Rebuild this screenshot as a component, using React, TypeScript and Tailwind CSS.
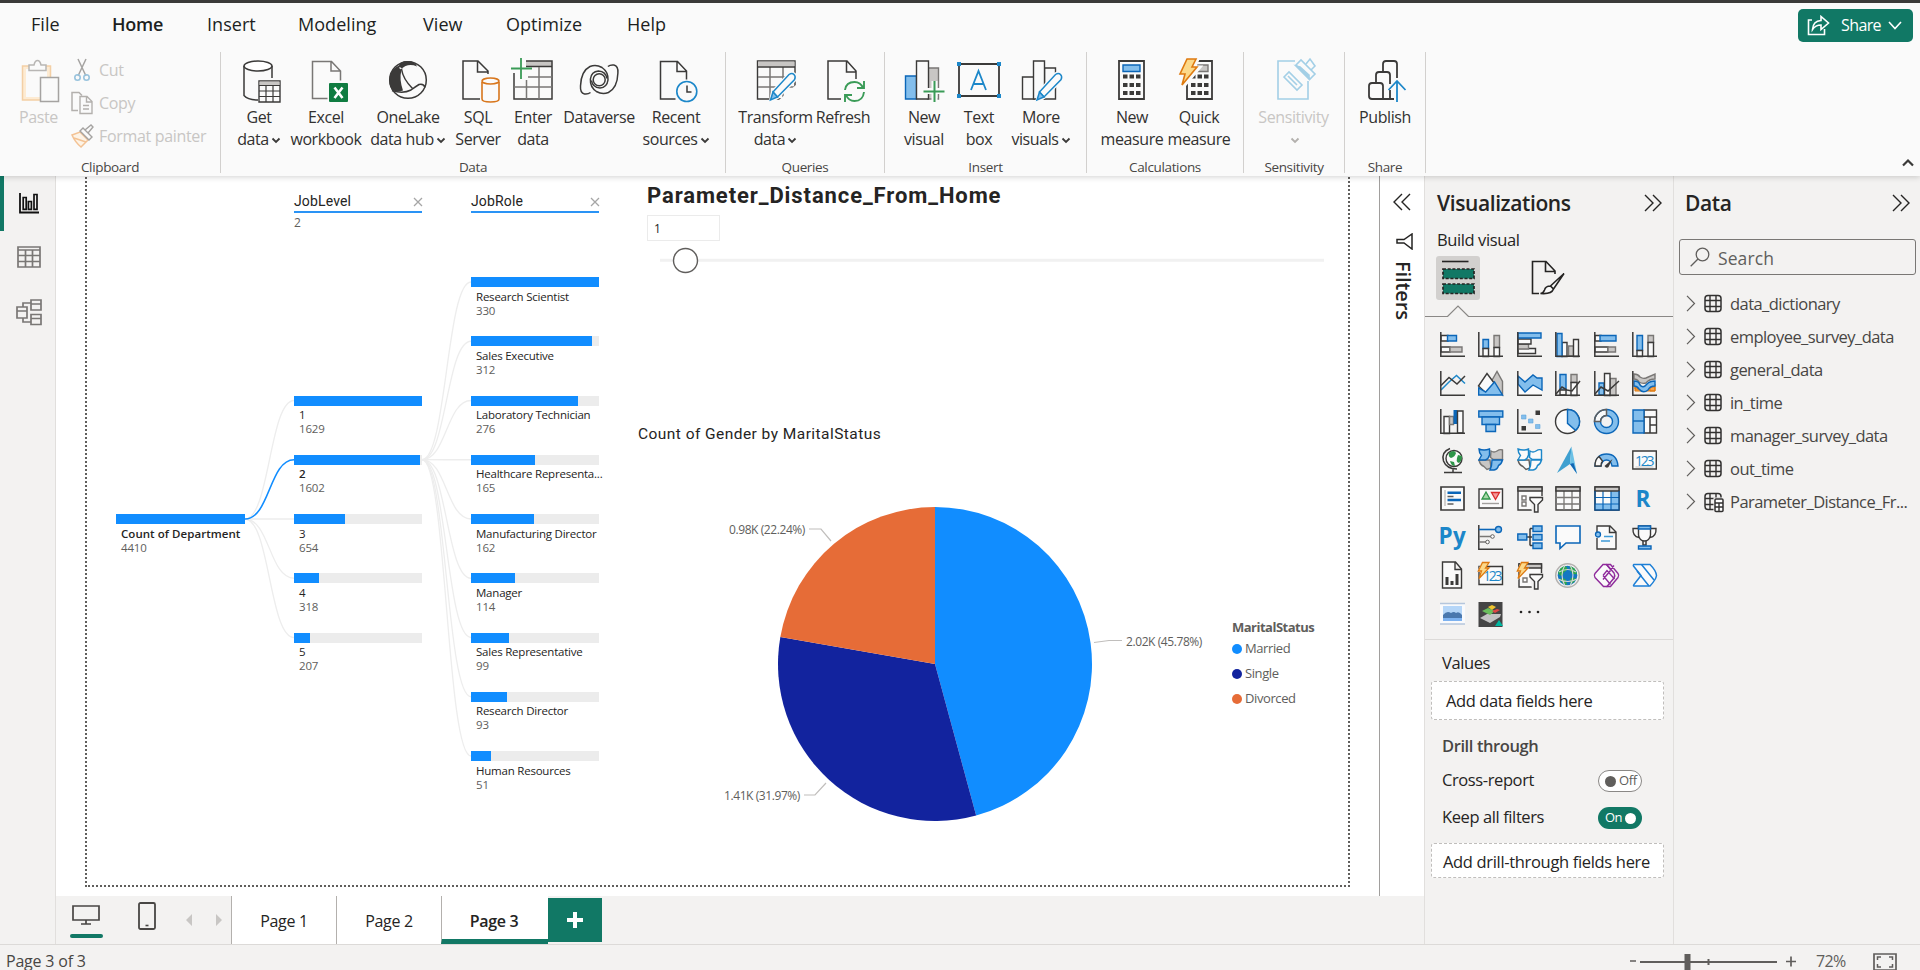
import React from "react";

type Kids = { children?: React.ReactNode };
type SvgP = React.SVGProps<SVGPathElement>;

const DARK = "#3b3a39";

const Svg = ({ w, h, vb, children, className }: Kids & { w: number; h: number; vb?: string; className?: string }) => (
  <svg width={w} height={h} viewBox={vb ?? `0 0 ${w} ${h}`} fill="none" className={className ?? "block shrink-0"}>
    {children}
  </svg>
);
const P = (p: SvgP) => <path stroke={DARK} strokeWidth={1.5} fill="none" {...p} />;
const box = (x: number, y: number, w: number, h: number) => `M${x} ${y}h${w}v${h}h${-w}z`;
const Blue = (p: SvgP) => <path fill="#83beec" stroke="#0b66b8" strokeWidth={1.4} {...p} />;
const Gray = (p: SvgP) => <path fill="#c8c6c4" stroke="#797775" strokeWidth={1.4} {...p} />;
const Wht = (p: SvgP) => <path fill="#fafafa" stroke={DARK} strokeWidth={1.4} {...p} />;
const Axis = () => <P d="M.8 0V24.2H25" />;

/* ---------- ribbon icons (42 x 44) ---------- */
const Pencil = () => (
  <g>
    <path d="M18 33 34 15.500q3-2 5 0t.6 5L22.500 38 16 42z" fill="#fafafa" stroke="#fafafa" strokeWidth={4} />
    <path d="M18 33 34 15.500q3-2 5 0t.6 5L22.500 38z" fill="#fafafa" stroke="#1c87c9" strokeWidth={1.5} />
    <path d="M18 33 22.500 38 15.500 41z" fill="#83beec" stroke="#1c87c9" strokeWidth={1.500} />
  </g>
);

const swirl = "M12.500 33.500Q10 35.500 6.500 35 2 34 2.500 27 3 12 12 7.500 18 5 24 8.500 30.500 13 30 21 29 28.500 22 29 14.500 28.500 13.500 21.500";

const icons: Record<string, React.ReactNode> = {
  paste: (
    <g strokeWidth={1.5} transform="translate(2 0)">
      <path d="M2.500 7h28v34h-28z" fill="#fdebd3" stroke="#f3cfa5" />
      <path d="M6 10h21v28H6z" fill="#fafafa" />
      <path d="M9 11.500V6h5q1-4.500 3.500-4.500T21 6h5v5.500z" fill="#fafafa" stroke="#b8b6b4" />
      <path d="M20.500 18.500h18v24h-18z" fill="#fafafa" stroke="#a5a3a1" />
    </g>
  ),
  getdata: (
    <g transform="translate(2 0)">
      <P d="M4 7v29.500q4 4.500 14 4.500M32 7v12" />
      <ellipse cx="18" cy="7" rx="14" ry="5" stroke={DARK} strokeWidth={1.5} fill="#fff" />
      <Wht d={box(19, 22, 21, 21)} />
      <path d="M19.500 22.500h20v4h-20z" fill="#c8c6c4" />
      <P strokeWidth={1.2} d="M19 26.500h21M19 32h21M19 37.500h21M26 26.500V43M33 26.500V43" />
    </g>
  ),
  excel: (
    <g transform="translate(3.500 .5)">
      <P stroke="#797775" d="M19 39H4V2h19l9 9.500v9.500M22.500 2v9.500H32" />
      <rect x="20.500" y="23.500" width="19" height="19" rx="1" fill="#107c41" />
      <path d="m26 28 8 10.500M34 28l-8 10.500" stroke="#fff" strokeWidth={2.6} />
    </g>
  ),
  onelake: (
    <g>
      <circle cx="21" cy="21" r="18.300" fill="#fafafa" stroke={DARK} strokeWidth={1.500} />
      <path d="M12 6.500Q13 2 20.500 2T30 7.500Q24 5 18.500 7 15 8.500 14.500 11 12 20 16 31.500 10 33.500 5 31 1.500 25 2.500 18 5 9 12 6.500z" fill={DARK} />
      <path d="M12.500 8.500 14.500 10" stroke="#fafafa" strokeWidth={1.300} />
      <P d="M14.500 10Q16 20 25.500 29.500M5 31.500Q16 35 24 31 28 28 32 25.500q5-1 6 3" />
    </g>
  ),
  sql: (
    <g transform="translate(2 0)">
      <P d="M21 40H4V2h15l10 10v3M18.500 2v11H29" />
      <path d="M23 23v17q0 3 8.500 3t8.500-3V23" stroke="#d8761c" strokeWidth={1.6} fill="#fafafa" />
      <ellipse cx="31.500" cy="22" rx="8.500" ry="3" stroke="#d8761c" strokeWidth={1.600} fill="#fafafa" />
    </g>
  ),
  enter: (
    <g>
      <path d="M14 2h26v5H14z" fill="#c8c6c4" />
      <P d="M14 2h26v38H2V14M14 7.500h26" />
      <P stroke="#797775" d="M16 18h24M2 28h38M14.500 21v19M27 8v32" />
      <path d="M9-1v21M-1 9.500h21" stroke="#3a9b57" strokeWidth={1.800} />
    </g>
  ),
  dataverse: (
    <g>
      <P d={swirl} />
      <P d={swirl} transform="rotate(180 21.200 20.500)" />
      <circle cx="21.200" cy="20.800" r="6" stroke={DARK} strokeWidth={1.500} />
    </g>
  ),
  recent: (
    <g transform="translate(1.500 .5)">
      <P d="M19 39.500H4V2h17l9 9.500v8.500M20.500 2v10H30" />
      <circle cx="30.300" cy="32" r="10" fill="#fafafa" stroke="#1c87c9" strokeWidth={1.600} />
      <P d="M30.500 26v6.500H35" />
    </g>
  ),
  transform: (
    <g>
      <Wht d={box(2.500, 2, 37.500, 38)} />
      <path d="M3 2.500h36.500v5H3z" fill="#c8c6c4" />
      <P d="M3 18h37M3 28h37M15 8v32M28 8v32" stroke="#797775" />
      <P d="M3 8h37" />
      <path d="M24 41h18V25z" fill="#fafafa" />
      <Pencil />
    </g>
  ),
  refresh: (
    <g transform="translate(2 0)">
      <P d="M17 40H4V2h19l9 10v8M22.500 2v11H32" />
      <path d="M21 31q1-8 9.500-8 6 0 8.500 6M40 33q-1 9-9.500 9-6 0-8.500-6M40 22v7h-7M21 43v-7h7" stroke="#3a9b57" strokeWidth={1.9} />
    </g>
  ),
  newvisual: (
    <g transform="translate(1.500 0)">
      <Gray d={box(23, 9, 11, 31)} />
      <Blue d={box(1, 17, 11, 23)} />
      <Wht d={box(12, 2, 12, 38)} />
      <path d="M30 22v21M20 32h21" stroke="#fafafa" strokeWidth={6} />
      <path d="M30 22v21M19 32.500h21" stroke="#3a9b57" strokeWidth={2} />
    </g>
  ),
  textbox: (
    <g>
      <Wht strokeWidth={1.800} d={box(1, 5, 40, 32)} />
      <path d="M13 31 20.500 12 28 31M15.500 25h10" stroke="#1c87c9" strokeWidth={1.800} />
      <path d="M-1 3h4v4h-4zM39 3h4v4h-4zM-1 35h4v4h-4zM39 35h4v4h-4z" fill="#1c87c9" />
    </g>
  ),
  morevisuals: (
    <g transform="translate(1.500 0)">
      <Wht d={box(23, 9, 11, 31)} />
      <Wht d={box(1, 18, 12, 22)} />
      <Wht d={box(12, 2, 11, 38)} />
      <Pencil />
    </g>
  ),
  calc: (
    <g>
      <Wht strokeWidth={1.800} d={box(8, 2, 25, 38)} />
      <Blue d={box(12, 6, 17, 6.500)} />
      <path d="M12 15.500h4.500v4H12zm6.500 0H23v4h-4.500zm6.500 0h4.500v4H25zM12 24h4.500v4H12zm6.500 0H23v4h-4.500zm6.500 0h4.500v4H25zM12 32h4.500v4H12zm6.500 0H23v4h-4.500zm6.500 0h4.500v4H25z" fill={DARK} />
    </g>
  ),
  quick: (
    <g transform="translate(-1 0)">
      <Wht strokeWidth={1.800} d={box(10, 2, 25, 38)} />
      <Gray d={box(19, 6, 12, 6.500)} />
      <path d="M14 15.500h4.500v4H14zm6.500 0H25v4h-4.500zm6.500 0h4.500v4H27zM14 24h4.500v4H14zm6.500 0H25v4h-4.500zm6.500 0h4.500v4H27zM14 32h4.500v4H14zm6.500 0H25v4h-4.500zm6.500 0h4.500v4H27z" fill={DARK} />
      <path d="M10 0h10l-4 9h5L5 28l3-12H3z" fill="#fafafa" stroke="#fafafa" strokeWidth={5} />
      <path d="M10 0h9l-4 8h5L5 26l3-11H3z" fill="#fcd98a" stroke="#de7a10" strokeWidth={1.600} />
    </g>
  ),
  sensitivity: (
    <g stroke="#a3cfe6" strokeWidth={1.600} transform="translate(2 0)">
      <path d="M20 2H3v38h30V22" />
      <path d="m9 18 5-5 13 13-5 5zM13 17l9 9" />
      <path d="m21 6 5-5 14 14-5 5z" />
      <path d="m21 7 4 1 9 8v4z" fill="#a3cfe6" />
      <path d="m31 5 4-5 5 7-4 4" />
    </g>
  ),
  publish: (
    <g transform="translate(2 0)">
      <P strokeWidth={1.800} d="M17 12V5q0-3 3-3h8q3 0 3 3v14M10 23v-7q0-3 3-3h8q3 0 3 3v9M3 27q0-3 3-3h8q3 0 3 3v13H6q-3 0-3-3zM17 40h11M24 31v9" />
      <path d="M31 43V22M22.500 31l8.500-9 8.500 9" stroke="#1c87c9" strokeWidth={1.800} />
    </g>
  ),
};

const Chev = ({ c = DARK }: { c?: string }) => (
  <Svg w={10} h={7} className="mb-px ml-[2px] inline-block">
    <path d="m1.500 1.500 3.500 3.500 3.500-3.500" stroke={c} strokeWidth={1.800} />
  </Svg>
);

type Btn = { icon: string; w: string; a: string; b?: string; chev?: boolean; off?: boolean };
const groups: { name: string; w: string; btns: Btn[] }[] = [
  {
    name: "Data",
    w: "w-[505px]",
    btns: [
      { icon: "getdata", w: "w-[76px]", a: "Get", b: "data", chev: true },
      { icon: "excel", w: "w-[58px]", a: "Excel", b: "workbook" },
      { icon: "onelake", w: "w-[106px]", a: "OneLake", b: "data hub", chev: true },
      { icon: "sql", w: "w-[34px]", a: "SQL", b: "Server" },
      { icon: "enter", w: "w-[76px]", a: "Enter", b: "data" },
      { icon: "dataverse", w: "w-[56px]", a: "Dataverse" },
      { icon: "recent", w: "w-[98px]", a: "Recent", b: "sources", chev: true },
    ],
  },
  {
    name: "Queries",
    w: "w-[159px]",
    btns: [
      { icon: "transform", w: "w-[99px]", a: "Transform", b: "data", chev: true },
      { icon: "refresh", w: "w-[36px]", a: "Refresh" },
    ],
  },
  {
    name: "Insert",
    w: "w-[202px]",
    btns: [
      { icon: "newvisual", w: "w-[78px]", a: "New", b: "visual" },
      { icon: "textbox", w: "w-[32px]", a: "Text", b: "box" },
      { icon: "morevisuals", w: "w-[92px]", a: "More", b: "visuals", chev: true },
    ],
  },
  {
    name: "Calculations",
    w: "w-[157px]",
    btns: [
      { icon: "calc", w: "w-[90px]", a: "New", b: "measure" },
      { icon: "quick", w: "w-[44px]", a: "Quick", b: "measure" },
    ],
  },
  { name: "Sensitivity", w: "w-[101px]", btns: [{ icon: "sensitivity", w: "w-[99px]", a: "Sensitivity", b: "", chev: true, off: true }] },
  { name: "Share", w: "w-[81px]", btns: [{ icon: "publish", w: "w-[80px]", a: "Publish" }] },
];

const RibbonButton = ({ icon, w, a, b, chev, off }: Btn) => (
  <div className={`${w} flex shrink-0 flex-col items-center whitespace-nowrap text-[16px] leading-[22px] ${off ? "text-[#c8c6c4]" : "text-[#323130]"}`}>
    <Svg w={42} h={44} className="mb-[3px] block shrink-0 overflow-visible">{icons[icon]}</Svg>
    <span>{a}</span>
    {b !== undefined && (
      <span>
        {b}
        {chev && <Chev c={off ? "#b3b0ad" : DARK} />}
      </span>
    )}
  </div>
);

const menu = [
  { t: "File", w: "w-[81px]" },
  { t: "Home", w: "w-[95px]" },
  { t: "Insert", w: "w-[91px]" },
  { t: "Modeling", w: "w-[125px]" },
  { t: "View", w: "w-[83px]" },
  { t: "Optimize", w: "w-[121px]" },
  { t: "Help", w: "w-[60px]" },
];

const groupLabel = "pt-[2px] text-center text-[13.500px] leading-[20px] tracking-[-0.35px] text-[#484644]";

function Header() {
  return (
    <header className="relative z-10 h-[176px] shrink-0 border-t-[3px] border-[#3b3a39] bg-[#fafafa] shadow-[0_1px_6px_rgba(0,0,0,0.18)]">
      <div className="flex h-[44px] items-center pl-[31px] text-[18px] text-[#201f1e]">
        {menu.map((m) => (
          <span key={m.t} className={`${m.w} pb-[2px] ${m.t === "Home" ? "font-semibold tracking-[-0.2px]" : "tracking-[0.05px]"}`}>{m.t}</span>
        ))}
        <button className="mr-[7px] ml-auto flex h-[33px] w-[115px] items-center rounded-[5px] bg-[#117865] pl-[9px] text-[16px] text-white">
          <Svg w={23} h={21}>
            <path d="M5 5H1.500v14.500h16V14" stroke="#fff" strokeWidth={1.600} />
            <path d="M14 1.500v4Q6 6 5.500 14.500q3-4.500 8.500-4.500v4.500L21.500 8z" stroke="#fff" strokeWidth={1.600} />
          </Svg>
          <span className="ml-[11px] w-[47px] text-left tracking-[-0.6px]">Share</span>
          <Svg w={15} h={9}><path d="m1 1 6 6.500L13 1" stroke="#fff" strokeWidth={1.600} /></Svg>
        </button>
      </div>
      <div className="mt-[5px] flex h-[121px]">
        <div className="flex w-[221px] shrink-0 flex-col border-r border-[#d2d0ce] text-[#c8c6c4]">
          <div className="flex h-[103px] shrink-0">
            <div className="flex w-[67px] flex-col items-center pt-[7px] pl-[10px] text-[16px] leading-[22px]">
              <Svg w={42} h={44} className="mb-[3px] block shrink-0 overflow-visible">{icons.paste}</Svg>
              <span>Paste</span>
            </div>
            <div className="flex flex-col pt-px pl-[4px] text-[16px] tracking-[-0.33px]">
              <div className="flex h-[33px] items-center">
                <Svg w={28} h={24}>
                  <path d="M7 1l8 17M15 1 7 18" stroke="#a5a3a1" strokeWidth={1.500} />
                  <circle cx="6.500" cy="19.500" r="2.700" stroke="#98c3dd" strokeWidth={1.600} />
                  <circle cx="15.500" cy="19.500" r="2.700" stroke="#98c3dd" strokeWidth={1.600} />
                </Svg>
                Cut
              </div>
              <div className="flex h-[33px] items-center">
                <Svg w={28} h={24}>
                  <path d="M7 19.500H1V1.500h7l3 3" stroke="#b3b0ad" strokeWidth={1.500} />
                  <path d="M9 5.500h7l5 5v12H9zM15.500 6v5H21M12 14.500h6M12 18h6" stroke="#b3b0ad" strokeWidth={1.400} />
                </Svg>
                Copy
              </div>
              <div className="flex h-[33px] items-center">
                <Svg w={28} h={24}>
                  <path d="m1 11 8-3 8 8-7 7q-6-5-9-12zM3 14l12 4" stroke="#f3c294" strokeWidth={1.500} fill="#fdf3e6" />
                  <path d="m9 7 3-3 9 9-3 3zM14 6l6-5 2 2-5 6" stroke="#a5a3a1" strokeWidth={1.400} fill="#fafafa" />
                </Svg>
                Format painter
              </div>
            </div>
          </div>
          <div className={groupLabel}>Clipboard</div>
        </div>
        {groups.map((g) => (
          <div key={g.name} className={`${g.w} flex shrink-0 flex-col border-r border-[#d2d0ce]`}>
            <div className="flex h-[103px] shrink-0 pt-[7px]">
              {g.btns.map((b) => <RibbonButton key={b.icon} {...b} />)}
            </div>
            <div className={groupLabel}>{g.name}</div>
          </div>
        ))}
        <div className="mr-[6px] ml-auto flex items-end pb-[6px]">
          <Svg w={12} h={9}><path d="m1 7.500 5-5 5 5" stroke={DARK} strokeWidth={2.200} /></Svg>
        </div>
      </div>
    </header>
  );
}

function LeftRail() {
  return (
    <nav className="flex w-[56px] shrink-0 flex-col border-r border-[#e1dfdd] bg-[#f3f2f1]">
      <div className="flex h-[55px] items-center border-l-4 border-[#117865] pl-[15px]">
        <Svg w={20} h={21}>
          <path d="M1 0v19.500h19" stroke="#111" strokeWidth={1.800} />
          <path d="M4.200 4.500h3v11.800h-3zM9.400 8.500h3v7.800h-3zM15 1.500h3v14.800h-3z" stroke="#111" strokeWidth={1.700} />
        </Svg>
      </div>
      <div className="flex h-[52px] items-center pl-[17px]">
        <Svg w={24} h={22}><path d="M1 1h22v20H1zM1 4h22M1 9.500h22M1 15.500h22M8.500 4v17M15.500 4v17" stroke="#797775" strokeWidth={1.700} /></Svg>
      </div>
      <div className="flex h-[58px] items-center pl-[16px]">
        <Svg w={26} h={27}><path d="M1 8h10v11H1zM1 12h10M15 1h10v10H15zM15 5h10M15 15.500h10v10H15zM15 19.500h10M7 8V4h8M7 19v4h8" stroke="#797775" strokeWidth={1.700} /></Svg>
      </div>
    </nav>
  );
}

type TreeNode = { label: string; value: string; fill: number; x: number; y: number; bold?: boolean };
const ROW = 59.25;
const tree: TreeNode[] = [
  { label: "Count of Department", value: "4410", fill: 129, x: 116, y: 519, bold: true },
  ...([["1", "1629", 128], ["2", "1602", 126], ["3", "654", 51], ["4", "318", 25], ["5", "207", 16]] as [string, string, number][]).map(
    ([label, value, fill], i) => ({ label, value, fill, x: 294, y: 400.5 + i * ROW, bold: label === "2" })
  ),
  ...([
    ["Research Scientist", "330", 128],
    ["Sales Executive", "312", 121],
    ["Laboratory Technician", "276", 107],
    ["Healthcare Representa...", "165", 64],
    ["Manufacturing Director", "162", 63],
    ["Manager", "114", 44],
    ["Sales Representative", "99", 38],
    ["Research Director", "93", 36],
    ["Human Resources", "51", 20],
  ] as [string, string, number][]).map(([label, value, fill], i) => ({ label, value, fill, x: 471, y: 282 + i * ROW })),
];

const link = (x1: number, y1: number, x2: number, y2: number) =>
  `M${x1} ${y1}C${(x1 + x2) / 2} ${y1} ${(x1 + x2) / 2} ${y2} ${x2} ${y2}`;

const arc = (a0: number, a1: number) => {
  const pt = (a: number) => `${935 + 157 * Math.sin(a * 2 * Math.PI)} ${664 - 157 * Math.cos(a * 2 * Math.PI)}`;
  return `M935 664L${pt(a0)}A157 157 0 ${a1 - a0 > 0.5 ? 1 : 0} 1 ${pt(a1)}z`;
};

const TreeHeader = ({ t, left }: { t: string; left: string }) => (
  <div className={`absolute top-[16px] ${left} flex h-[21px] w-[128px] items-center justify-between border-b-[2px] border-[#2a93f5] font-[Roboto] text-[14px] tracking-[0.15px] text-[#252423]`}>
    {t}
    <Svg w={10} h={10} className="mt-px -mr-px block"><path d="m1 1 8 8M9 1 1 9" stroke="#a6a6a6" strokeWidth={1.300} /></Svg>
  </div>
);

function Canvas() {
  return (
    <div className="relative h-[720px] w-[1323px] shrink-0 overflow-hidden bg-white">
      <div className="absolute -top-[20px] left-[29px] h-[731px] w-[1265px] border-2 border-dotted border-[#605e5c]" />
      <svg className="absolute inset-0" width={1323} height={720} viewBox="56 176 1323 720" fill="none">
        <g stroke="#ededed" strokeWidth={1.300}>
          {[0, 2, 3, 4].map((i) => <path key={i} d={link(245, 519, 294, 400.5 + i * ROW)} />)}
          {[0, 1, 2, 3, 4, 5, 6, 7, 8].map((i) => <path key={i} d={link(422, 459.7, 471, 282 + i * ROW)} />)}
        </g>
        <path d={link(245, 519, 294, 459.7)} stroke="#118dff" strokeWidth={1.500} />
        <path d={arc(0, 0.4578)} fill="#118dff" />
        <path d={arc(0.4578, 0.7776)} fill="#12239e" />
        <path d={arc(0.7776, 1)} fill="#e66c37" />
        <g stroke="#c0bebc" strokeWidth={1.200}>
          <path d="m1094 642.500 15-2h13M809 529h12l10 12M804 795h11l11-12" />
        </g>
        <g fill="#605e5c" fontSize={12} className="font-['Open_Sans',sans-serif]">
          <text x={1126} y={645.500} textLength={76}>2.02K (45.78%)</text>
          <text x={729} y={533.500} textLength={76}>0.98K (22.24%)</text>
          <text x={724} y={799.500} textLength={76}>1.41K (31.97%)</text>
        </g>
        <path d="M660 260.300h664" stroke="#f1f1f1" strokeWidth={3} />
        <circle cx={685.500} cy={260.500} r={12} fill="#fff" stroke="#605e5c" strokeWidth={1.400} />
      </svg>
      <TreeHeader t="JobLevel" left="left-[238px]" />
      <TreeHeader t="JobRole" left="left-[415px]" />
      <span className="absolute top-[39px] left-[238px] text-[12px] leading-[16px] text-[#605e5c]">2</span>
      {tree.map((n) => (
        <div key={n.label} className="absolute w-[128px]" style={{ left: n.x - 56, top: n.y - 5 - 176 }}>
          <div className="h-[10px] bg-[#ececec]">
            <div className="h-full bg-[#118dff]" style={{ width: n.fill }} />
          </div>
          <div className={`mt-[2.500px] pl-[5px] text-[11.500px] leading-[14px] whitespace-nowrap text-[#252423] ${n.bold ? "font-semibold tracking-[0.05px]" : "tracking-[-0.22px]"}`}>{n.label}</div>
          <div className="pl-[5px] text-[11.500px] leading-[14px] tracking-[-0.2px] text-[#605e5c]">{n.value}</div>
        </div>
      ))}
      <div className="absolute top-[5.500px] left-[591px] font-[Roboto] text-[22px] leading-[28px] font-bold tracking-[0.9px] text-[#252423]">Parameter_Distance_From_Home</div>
      <div className="absolute top-[39px] left-[591px] flex h-[26px] w-[73px] items-center border border-[#ebebeb] pt-px pl-[6px] text-[12px] text-[#252423]">1</div>
      <div className="absolute top-[247.500px] left-[582px] font-[Roboto] text-[15.500px] leading-[20px] tracking-[0.45px] text-[#252423]">Count of Gender by MaritalStatus</div>
      <div className="absolute top-[441px] left-[1176px] text-[13px] tracking-[-0.4px] text-[#605e5c]">
        <div className="h-[19px] leading-[20px] font-bold tracking-[-0.5px]">MaritalStatus</div>
        {[["Married", "bg-[#118dff]"], ["Single", "bg-[#12239e]"], ["Divorced", "bg-[#e66c37]"]].map(([t, c]) => (
          <div key={t} className="flex h-[25px] items-center gap-[3px]">
            <span className={`size-[10px] rounded-full ${c}`} />
            {t}
          </div>
        ))}
      </div>
    </div>
  );
}

const tabs = [
  { t: "Page 1", c: "w-[105px] pt-px" },
  { t: "Page 2", c: "w-[105px] pt-px" },
  { t: "Page 3", c: "w-[107px] border-b-[5px] border-b-[#117865] pt-[6px] pr-[2px] font-semibold" },
];

function PageTabs() {
  return (
    <div className="flex h-[48px] bg-[#f3f2f1]">
      <div className="flex w-[175px]">
        <div className="mt-[9px] ml-[14px] flex w-[33px] flex-col items-center">
          <Svg w={28} h={20} className="mr-[2px] block"><path d="M1 1h26v14H1zM14 15v4M9 19h10" stroke="#484644" strokeWidth={1.700} /></Svg>
          <div className="mt-[9px] h-[4px] w-[33px] rounded-full bg-[#117865]" />
        </div>
        <Svg w={18} h={28} className="mt-[6px] ml-[35px] block">
          <rect x="1" y="1" width="16" height="26" rx="1.500" stroke="#484644" strokeWidth={1.800} />
          <path d="M7.500 23.500h3" stroke="#484644" strokeWidth={1.600} />
        </Svg>
        <Svg w={36} h={12} className="mt-[18px] ml-[30px] block"><path d="M6 0v12L0 6zM30 0v12l6-6z" fill="#c8c6c4" /></Svg>
      </div>
      {tabs.map(({ t, c }) => (
        <div key={t} className={`flex items-center justify-center border-l border-[#b3b0ad] bg-white text-[16px] tracking-[-0.3px] text-[#252423] ${c}`}>
          {t}
        </div>
      ))}
      <div className="mt-[2px] flex h-[44px] w-[54px] items-center justify-center bg-[#117865]">
        <Svg w={16} h={16}><path d="M8 0v16M0 8h16" stroke="#fff" strokeWidth={4} /></Svg>
      </div>
    </div>
  );
}

const Dbl = ({ left }: { left?: boolean }) => (
  <Svg w={18} h={18} className={left ? "block -scale-x-100" : "block"}>
    <path d="m1 1 8 8-8 8M9 1l8 8-8 8" stroke="#252423" strokeWidth={1.400} />
  </Svg>
);

function FiltersPane() {
  return (
    <aside className="flex h-[720px] w-[45px] flex-col items-center border-l border-[#a19f9d] bg-white pt-[17px]">
      <Dbl left />
      <Svg w={17} h={17} className="mt-[22px] ml-[4px] block"><path d="M16 1v15L8 10H1V6.500h7z" stroke="#252423" strokeWidth={1.500} /></Svg>
      <span className="mt-[11px] pl-[1px] text-[20px] leading-[24px] font-semibold tracking-[-0.1px] text-[#252423] [writing-mode:vertical-rl]">Filters</span>
    </aside>
  );
}

const bolt = (
  <g>
    <path d="M4-1h7L8 5h4L1 17l2-8H-1z" fill="#f3f2f1" />
    <path d="M4.500-.5H11L7.500 5H11L1 15.500 3.500 8H.3z" fill="#fcd98a" stroke="#de7a10" strokeWidth={1.300} />
  </g>
);
const funnel = <Wht d="M13 11.500h12.500v2.500l-4.500 4.500V26h-3.500v-7.500L13 14z" />;
const num = (x: number) => (
  <text x={x} y={18} fontSize={14} textLength={19} fill="#1c87c9" className="font-['Open_Sans',sans-serif]">123</text>
);
const landA = "M1 1q5 2 10.500 0v6q-1 4-4 5H1q1-2 2.500-4.500Q1 5 1 1z";
const landB = "M13 3q3 2 6 0t5.500-1v9.500h-9l-3-2z";
const landC = "M1 12h11l1 8-4 1.500-3-3Q2 17 1 12z";
const landD = "M14 12h10.500q-1 4-4 5.500-1 4-4.500 4.500h-4q2-4 2-10z";

const viz: React.ReactNode[] = [
  <g><Wht d={box(1, 3.500, 7, 5.500)} /><Blue d={box(7.500, 3.500, 9, 5.500)} /><Wht d={box(1, 15, 9, 5)} /><Gray d={box(10, 15, 12, 5)} /><Axis /></g>,
  <g><Blue d={box(5, 7.500, 5.500, 9)} /><Wht d={box(5, 16.500, 5.500, 8)} /><Gray d={box(16, 3.500, 5.500, 12)} /><Wht d={box(16, 15.500, 5.500, 9)} /><Axis /></g>,
  <g><Wht d={box(1, 16.500, 17.500, 5)} /><Gray d={box(1, 12, 10.500, 5)} /><Wht d={box(1, 7, 13, 5)} /><Blue d={box(1, 1, 23, 5)} /><Axis /></g>,
  <g><Wht d={box(7, 10.500, 5, 14)} /><Gray d={box(13.500, 14, 5, 10)} /><Wht d={box(18.500, 7.500, 5, 17)} /><Blue d={box(2, 1.500, 5, 23)} /><Axis /></g>,
  <g><Wht d={box(1, 3.500, 6, 5.500)} /><Blue d={box(6, 3.500, 16, 5.500)} /><Wht d={box(1, 15, 13, 5)} /><Gray d={box(14, 15, 7.500, 5)} /><Axis /></g>,
  <g><Blue d={box(5, 3.500, 5.500, 15)} /><Wht d={box(5, 18.500, 5.500, 6)} /><Gray d={box(16, 3.500, 5.500, 7)} /><Wht d={box(16, 10.500, 5.500, 14)} /><Axis /></g>,
  <g><P stroke="#1c87c9" d="m1 19 8-8 7.500-6.500 8.500 8" /><P d="M1 14.500 9 6.500l8 6.500 8-8" /><Axis /></g>,
  <g><Gray d="m13 11 6-10.500 5.500 10V24z" /><Wht d="M.5 15 9 2.500l7.500 10L8 22z" /><Blue d="M.7 24v-7l7 4L16.500 11l8 13z" /></g>,
  <g><Wht stroke="none" d="m1 13 7 8 8-8 9 7v4H1z" /><Blue d="M1 5l7 6 8-7 4 3h5v12l-9-5-8 7-7-8z" /><Axis /></g>,
  <g><Blue d={box(5, 3.500, 6, 16)} /><Wht d={box(5, 19, 6, 5)} /><Gray d={box(16, 3.500, 6, 8)} /><Wht d={box(16, 11.500, 6, 13)} /><P d="m1 23 6-7 5 3 5 1 8-10" /><Axis /></g>,
  <g><Blue d={box(5, 12, 5, 12)} /><Gray d={box(16, 7.500, 6, 17)} /><Wht d={box(10.500, 2.500, 5.500, 22)} /><P d="m1 23 6-7 7 4 11-10" /><Axis /></g>,
  <g><path d="M3 13h5v5H3zm15 0h5v7h-5zM3 16h20v4H3z" fill="#f7a24b" stroke="#de7a10" /><Gray d="M2 3q4 0 6 3 3 2 6 1l9-4v5q-6 0-9 4-4 1-7-1-2-3-5-3z" /><Blue d="M2 10q5 0 6 4 3 4 7-1 3-3 8-3v5q-5 0-7 4-5 4-9-1-2-3-5-3z" /><Axis /></g>,
  <g><Wht d={box(4, 7.500, 5.500, 17)} /><Gray d={box(9.500, 7.500, 4, 8)} /><path d="M13.500 1h4v14h-4z" fill="#0b66b8" /><Wht d={box(17.500, 2, 5.500, 22)} /><Axis /></g>,
  <g><Blue d={box(.8, 2, 24, 6)} /><Blue d={box(4, 8, 17.500, 7.500)} /><Blue d={box(8, 15.500, 9.500, 7)} /></g>,
  <g><Axis /><path d="M4.500 6H9v4H4.500zM11.500 10H16v4h-4.500zM18.500 15.500H23v4h-4.500z" fill="#83beec" stroke="#5fa5dc" strokeWidth=".6" /><path d="M18.500 1.500H23V6h-4.500zM4.500 17H9v4.500H4.500z" fill={DARK} /></g>,
  <g><circle cx="12.500" cy="12.500" r="12" fill="#fafafa" stroke={DARK} strokeWidth={1.400} /><Blue d="M12.500.5a12 12 0 0 1 8 20.900l-8-7z" /></g>,
  <g><circle cx="12.500" cy="12.500" r="9" stroke="#83beec" strokeWidth={6} /><path d="M12.500 3.500a9 9 0 0 0-9 9" stroke="#fafafa" strokeWidth={6} /><circle cx="12.500" cy="12.500" r="12" stroke="#0b66b8" strokeWidth={1.400} /><circle cx="12.500" cy="12.500" r="6" stroke="#0b66b8" strokeWidth={1.400} /><P stroke="#605e5c" d="M12.500.5a12 12 0 0 0-12 12h6a6 6 0 0 1 6-6z" /></g>,
  <g><Wht d={box(12, 1, 12.500, 23)} /><Blue d={box(1, 1, 11, 23)} /><path d="M1 12h11" stroke="#0b66b8" strokeWidth={1.400} /><P d="M12 8h12.500M18 8v16M18 16h6.500" /></g>,
  <g><circle cx="14" cy="10.500" r="8" fill="#fafafa" stroke={DARK} strokeWidth={1.400} /><path d="M9 5q5-4 7 0-1 4-5 5-3-1-2-5zm9 2 4 1q0 5-3 7-4-1-1-8zm-8 6 4 1 1 4q-4 0-5-5z" fill="#2f9549" /><P d="M10 .5Q1 4 3.500 13q3 8 13.500 8M4 24.500h18M13 21.500v3" /></g>,
  <g><Gray d={landB} /><Gray d={landC} /><Blue d={landA} /><Blue d={landD} /></g>,
  <g><Wht stroke="#1c87c9" d={landB} /><Wht stroke="#605e5c" d={landC} /><Wht stroke="#1c87c9" d={landA} /><Wht stroke="#1c87c9" d={landD} /></g>,
  <g><path d="M16.500-1.500 2 25l13-9z" fill="#3fa0d0" /><path d="M16.500-1.500 22 26l-7-10z" fill="#6cc1e6" /><path d="M18.500 15 22 26l-7-10z" fill="#1267b4" /></g>,
  <g><path d="M1 18Q2 6 12.500 6T24 18h-6q-1-6-5.500-6T7 18z" fill="#83beec" stroke="#0b66b8" strokeWidth={1.400} /><Wht d="M1 18Q1 11 5 8.500L8.500 13Q7 15 7 18z" /><path d="m10.500 18 8-7-4 8q-2 2-4-1z" fill={DARK} /></g>,
  <g><Wht d={box(.8, 3, 23.500, 18)} />{num(3)}<path d="M3.500 19h18" stroke="#c8c6c4" /></g>,
  <g><Wht strokeWidth={1.700} d={box(1, 1, 23, 23)} /><path d="M5 4v16" stroke="#c8c6c4" strokeWidth={1.600} /><path d="M7.500 6.800H21M7.500 14H21" stroke="#0b66b8" strokeWidth={2.400} /><path d="M7.500 10.500h6M7.500 18h6" stroke="#605e5c" strokeWidth={1.400} /></g>,
  <g><Wht d={box(1, 3, 23.500, 19)} /><path d="m4 13 4-7 4 7z" fill="#a6d8a8" stroke="#2f9549" strokeWidth={1.300} /><path d="m13.500 6.500 4 7 4-7z" fill="#f59a9a" stroke="#d92c2c" strokeWidth={1.300} /><path d="M4 17.500h17" stroke="#a19f9d" strokeWidth={1.400} /></g>,
  <g><Wht d={box(1, 1, 24, 23)} /><Gray stroke={DARK} d={box(1, 1, 24, 4)} /><Gray fill="#fff" d={box(5, 10, 4, 4)} /><Gray fill="#fff" d={box(5, 16, 4, 4)} /><path d="M12 10h14v16H15z" fill="#f3f2f1" />{funnel}</g>,
  <g><Wht d={box(1, 1, 24, 23)} /><path d="M1 11.500h24M1 18h24M9 5v19M17 5v19" stroke="#797775" strokeWidth={1.300} /><Gray stroke={DARK} d={box(1, 1, 24, 4)} /></g>,
  <g><Wht d={box(1, 1, 24, 23)} /><path d="M17 5h8v19H1v-6h16z" fill="#83beec" /><path d="M1 11.500h24M1 18h24M9 5v19M17 5v19" stroke="#0b66b8" strokeWidth={1.200} /><Gray stroke={DARK} d={box(1, 1, 24, 4)} /><path d="M25 5v19H1V5" stroke="#0b4f90" strokeWidth={1.400} /></g>,
  <text x={3.500} y={20.500} fontSize={22.500} fontWeight={700} fill="#1c87c9" className="font-['Open_Sans',sans-serif]">R</text>,
  <text x={-1.500} y={18.500} fontSize={22.500} fontWeight={700} textLength={27} fill="#1c87c9" className="font-['Open_Sans',sans-serif]">Py</text>,
  <g><Axis /><path d="M1 4.500h17" stroke="#0b66b8" strokeWidth={1.600} /><circle cx="20.500" cy="4.500" r="3" fill="#83beec" stroke="#0b66b8" strokeWidth={1.400} /><path d="M1 11.500h12M1 17h7" stroke="#797775" strokeWidth={1.400} /><circle cx="14.500" cy="11.500" r="1.800" fill="#fff" stroke="#605e5c" /><circle cx="9.500" cy="17" r="1.800" fill="#fff" stroke="#605e5c" /></g>,
  <g><P d="M9 12h6M13 3.500V20.500M13 3.500h3M13 20.500h3" /><Blue d={box(.8, 9, 9, 6)} /><Blue d={box(16, 1, 9, 5.500)} /><Blue d={box(16, 9.500, 9, 5.500)} /><Blue d={box(16, 18, 9, 5.500)} /></g>,
  <Wht stroke="#0b66b8" strokeWidth={1.600} d="M1 1h24v17H11l-6 5.500V18H1z" />,
  <g><Wht d="M3 8V1h13l6 6v17H3V13M15.500 1v6.500H22" /><circle cx="4" cy="9.500" r="2.500" fill="#83beec" stroke="#0b66b8" strokeWidth={1.300} /><path d="M10 11.500h9M7 16h9" stroke="#3f9bd8" strokeWidth={1.500} /></g>,
  <g><Wht d="M6.500 1h12v9q-1 6-6 6t-6-6zM6.500 3.500H1q-.5 8 6 9M18.500 3.500H24q.5 8-6 9" /><Blue d={box(6.500, 1, 12, 3)} /><P d="M11 16v4h3v-4" /><Blue d={box(6.500, 21, 12.500, 3)} /></g>,
  <g><Wht d="M2.500-1h13l6 7v19h-19zM15-1v7.500h6.500" /><path d="M5.500 14h3v8h-3zM10.500 18h3v4h-3zM15.500 11h3v11h-3z" fill={DARK} /></g>,
  <g><Wht d={box(1, 3.500, 23.500, 18)} />{num(5)}{bolt}</g>,
  <g><Wht d={box(2, 1, 22.500, 23)} /><Gray stroke={DARK} d={box(2, 1, 22.500, 4)} /><Gray fill="#fff" d={box(6, 15, 4, 4)} /><path d="M12 10h14v16H15z" fill="#f3f2f1" />{funnel}{bolt}</g>,
  <g><circle cx="12.500" cy="12.500" r="9.800" fill="#1477c2" /><path d="M3 10q2-6 7-7 4 2 1 5-3 1-3 4-3 2-5-2zm12-7q6 2 7 8-3 1-5-1-3-3-2-7zM5 16q4-2 6 1l1 5q-5-1-7-6zm11-1q3-1 5 1-2 4-5 5-2-3 0-6z" fill="#2fa84a" /><path d="M4 9q9-5 17 0M3 16q10 5 19 0M10 2q-6 10 0 21M15 2q6 10 0 21" stroke="#d6d6d6" strokeWidth={1.100} /><circle cx="12.500" cy="12.500" r="11.800" stroke="#b3b1af" strokeWidth={1.500} /></g>,
  <g stroke="#8f2b9c" strokeWidth={1.400} fill="#fafafa"><path d="M7 1h4l2 2.500L15 1h4l6 9.500q1 2 0 4L18 24h-4l-2-2.500" fill="none" stroke="none" /><path d="M9 1.500h3.500L20 10q1.500 2.500 0 5l-7 8.500H9.500L1 14.500q-1.500-2 0-4z" /><path d="M16 1.500h-3.500L5.500 10q-1.500 2.500 0 5" fill="none" stroke="none" /><path d="m12.500 1.500 4 5L20 2.500M12.500 1.500h4l7.500 9q1.500 2 0 4l-7.500 9h-4M9 12.500l4-5 7.500 8.500M16.500 7.500 9 16.500M9 12.500l7.500 9" fill="none" /></g>,
  <g stroke="#1c7fd6" strokeWidth={1.500} fill="#fafafa"><path d="M2 1.500h16q6 6 6.500 11-.5 4-6.500 10.500H2q-1-.5 0-1.500L9 12.500 1.500 3q-.5-1 .5-1.500z" /><path d="M4.500 6.500 12 1.500M9 12.500 17 3M2 22 20 5M8 23 23.500 9" fill="none" stroke="none" /><path d="M5 8 17 23M9.500 1.500 22 17" fill="none" /></g>,
  <g><path d="M0 1h25v21H0z" fill="#f9fafc" /><path d="M0 1.500h25M0 22h25" stroke="#b5c6dc" strokeWidth={1.300} /><path d="M3 4h19v15H3z" fill="#b5d6f8" /><path d="M3 13q4-5 8-2 3-2 5 0 3-2 6 2v3H3z" fill="#4a78ae" /><path d="M3 16h19v3H3z" fill="#7db2f0" /></g>,
  <g><path d="M.5 0h24v25H.5z" fill="#454545" /><path d="m2 16 7-4 14 0-1 3-10 6z" fill="#c3c3c3" /><path d="m4 9 6-3 7 3-5 4z" fill="#6abf5c" /><path d="m10 5 4-2 4 2-4 3z" fill="#f0c52f" /><path d="m14 9 5-2 3 1-5 3z" fill="#e04545" /><path d="m17 24 4-6 4 6z" fill="#00b7a0" /></g>,
  <g fill="#252423"><circle cx="4" cy="10" r="1.300" /><circle cx="12.500" cy="10" r="1.300" /><circle cx="21" cy="10" r="1.300" /></g>,
];

function VizPane() {
  return (
    <aside className="flex h-[768px] w-[249px] shrink-0 flex-col border-l border-[#e1dfdd] bg-[#f3f2f1] text-[16.500px] tracking-[-0.4px] text-[#252423]">
      <div className="flex h-[54px] items-center justify-between pr-[11px] pl-[12px] text-[21px] font-semibold">
        <span className="pt-[2px]">Visualizations</span>
        <Dbl />
      </div>
      <div className="mt-[-2px] h-[24px] pl-[12px] text-[16.500px] leading-[24px] font-medium">Build visual</div>
      <div className="mt-[4px] flex h-[44px] pl-[11px]">
        <div className="size-[44px] rounded-[3px] bg-[#d2d0ce]">
          <Svg w={44} h={44}>
            <path d="M6 5.500h26.500" stroke="#252423" strokeWidth={1.600} />
            <path d="M7 13h31v9.500H7zM7 28h31v9.500H7z" fill="#117865" stroke="#252423" strokeWidth={1.700} strokeDasharray="3 1.700" />
          </Svg>
        </div>
        <Svg w={36} h={36} className="mt-[4px] ml-[51px] block">
          <path d="M8 33.500H1.500v-32H15l9 9.500v3M14.500 1.500v10H24" stroke="#252423" strokeWidth={1.600} />
          <path d="M33 13.500 19.500 26l3 3zM19.500 26q-5 0-6 4-1 3-4 3.500 11 1 13-4.500z" stroke="#252423" strokeWidth={1.600} fill="#fafafa" />
        </Svg>
      </div>
      <Svg w={248} h={12} className="mt-[5px] block shrink-0"><path d="M0 11.500h22.500L33 1l10.500 10.500H248" stroke="#8a8886" strokeWidth={1.200} /></Svg>
      <div className="mt-[15px] grid h-[307px] shrink-0 grid-cols-[repeat(6,38.4px)] grid-rows-[repeat(8,38.5px)] pl-[15px]">
        {viz.map((v, i) => (
          <Svg key={i} w={25} h={25} className="block overflow-visible">{v}</Svg>
        ))}
      </div>
      <div className="border-t border-[#dcdad8] pt-[11px] pl-[17px] leading-[24px]">Values</div>
      <div className="mt-[6px] ml-[6px] flex h-[39px] w-[233px] shrink-0 items-center rounded-[3px] border border-dashed border-[#c0bebc] bg-white pt-px pl-[14px]">Add data fields here</div>
      <div className="mt-[14px] pl-[17px] leading-[24px] font-semibold text-[#484644]">Drill through</div>
      <div className="mt-[11px] flex h-[24px] items-center justify-between pr-[31px] pl-[17px]">
        <span className="pb-px">Cross-report</span>
        <span className="flex h-[22px] w-[44px] items-center gap-[3px] rounded-full border border-[#8a8886] bg-white pl-[6px] text-[13px] text-[#605e5c]">
          <span className="size-[11px] shrink-0 rounded-full bg-[#605e5c]" />
          Off
        </span>
      </div>
      <div className="mt-[13px] flex h-[24px] items-center justify-between pr-[31px] pl-[17px]">
        <span className="pb-px">Keep all filters</span>
        <span className="flex h-[22px] w-[44px] items-center gap-[3px] rounded-full bg-[#117865] pl-[7px] text-[13px] tracking-[-0.7px] text-white">
          On
          <span className="size-[11px] shrink-0 rounded-full bg-white" />
        </span>
      </div>
      <div className="mt-[13px] ml-[6px] flex h-[35px] w-[233px] shrink-0 items-center rounded-[3px] border border-dashed border-[#c0bebc] bg-white pt-[3px] pl-[11px] tracking-[-0.33px] whitespace-nowrap">Add drill-through fields here</div>
    </aside>
  );
}

const tables = ["data_dictionary", "employee_survey_data", "general_data", "in_time", "manager_survey_data", "out_time", "Parameter_Distance_Fr..."];

function DataPane() {
  return (
    <aside className="flex h-[768px] min-w-0 grow flex-col border-l border-[#e1dfdd] bg-[#f3f2f1]">
      <div className="flex h-[54px] items-center justify-between pr-[10px] pl-[11px] text-[21px] font-semibold tracking-[-0.4px] text-[#252423]">
        <span className="pt-[2px]">Data</span>
        <Dbl />
      </div>
      <div className="mt-[9px] ml-[5px] flex h-[36px] w-[237px] items-center rounded-[3px] border border-[#797775] pl-[10px] text-[17.500px] tracking-[0.1px] text-[#605e5c]">
        <Svg w={20} h={20}><circle cx="12.500" cy="7.500" r="6.300" stroke="#605e5c" strokeWidth={1.300} /><path d="M8 12 .7 19.300" stroke="#605e5c" strokeWidth={1.300} /></Svg>
        <span className="ml-[8px] pt-[2px]">Search</span>
      </div>
      <div className="mt-[12px] flex flex-col text-[16.500px] tracking-[-0.55px] text-[#484644]">
        {tables.map((t, i) => (
          <div key={t} className="flex h-[33px] items-center pl-[12px] whitespace-nowrap">
            <Svg w={10} h={17}><path d="m1 .8 7.500 7.700L1 16.200" stroke="#605e5c" strokeWidth={1.200} /></Svg>
            <Svg w={20} h={19} className="ml-[8px] block shrink-0 overflow-visible">
              <rect x="1" y="1.500" width="16" height="16" rx="3" stroke="#323130" strokeWidth={1.500} />
              <path d="M1 6.500h16M1 12.500h16M6 1.500v16M12 1.500v16" stroke="#323130" strokeWidth={1.400} />
              {i === 6 && (
                <g>
                  <rect x="9.500" y="5.500" width="11" height="15" fill="#f3f2f1" />
                  <rect x="11" y="7" width="8" height="12.500" rx="1" fill="#fff" stroke="#323130" strokeWidth={1.500} />
                  <path d="M11 11h8M11 15h8M15 11v8" stroke="#323130" strokeWidth={1.400} />
                </g>
              )}
            </Svg>
            <span className="ml-[6px] pt-[2px]">{t}</span>
          </div>
        ))}
      </div>
    </aside>
  );
}

function StatusBar() {
  return (
    <footer className="flex h-[26px] shrink-0 items-start border-t border-[#dcdad8] bg-[#f3f2f1] text-[16px] leading-[16px] text-[#484644]">
      <span className="pt-[8px] pl-[6px] tracking-[-0.2px]">Page 3 of 3</span>
      <div className="ml-auto flex items-start pr-[23px]">
        <Svg w={170} h={18} className="mt-[8px] block">
          <path d="M1 8h6M157 8.500h10M162 3.500v10" stroke="#605e5c" strokeWidth={1.700} />
          <path d="M11 9h137" stroke="#605e5c" strokeWidth={1.800} />
          <path d="M55.500 1h6v16h-6zM78.500 6h2v6h-2z" fill="#605e5c" />
        </Svg>
        <span className="ml-[17px] w-[57px] pt-[8px] tracking-[-0.6px] text-[#605e5c]">72%</span>
        <Svg w={24} h={18} className="mt-[8px] block">
          <path d="M1 1h22v16H1z" stroke="#605e5c" strokeWidth={1.700} />
          <path d="M4.500 7V4H8M16 4h3.500v3M19.500 11v3H16M8 14H4.500v-3" stroke="#605e5c" strokeWidth={1.500} />
        </Svg>
      </div>
    </footer>
  );
}

export default function App() {
  return (
    <div className="flex h-[970px] w-[1920px] flex-col overflow-hidden bg-white font-['Open_Sans','Noto_Sans',sans-serif] tracking-[-0.4px]">
      <Header />
      <div className="flex h-[768px] shrink-0">
        <LeftRail />
        <div className="flex w-[1368px] shrink-0 flex-col">
          <div className="flex h-[720px]">
            <Canvas />
            <FiltersPane />
          </div>
          <PageTabs />
        </div>
        <VizPane />
        <DataPane />
      </div>
      <StatusBar />
    </div>
  );
}
